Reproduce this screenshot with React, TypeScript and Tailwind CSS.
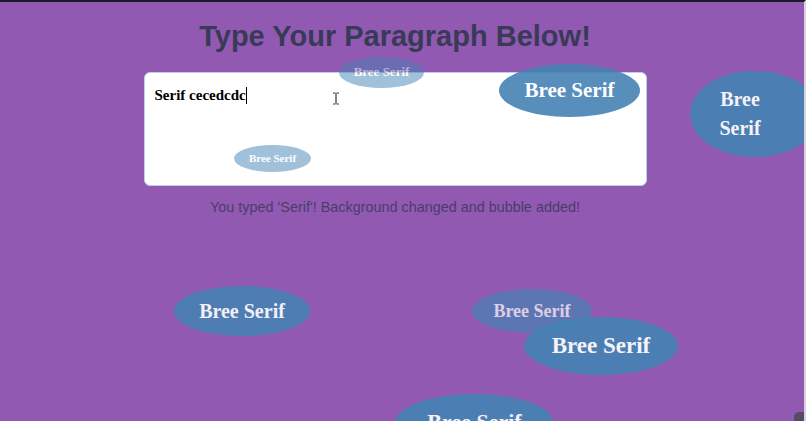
import React from "react";

type Bubble = {
  left: number;
  top: number;
  w: number;
  h: number;
  size: number;
  opacity: number;
  lines?: string[];
};

const bubbles: Bubble[] = [
  { left: 174, top: 286, w: 136, h: 50, size: 20, opacity: 0.9 },
  { left: 472, top: 289, w: 120, h: 44, size: 18, opacity: 0.7 },
  { left: 524, top: 317, w: 154, h: 58, size: 23, opacity: 0.92 },
  { left: 396, top: 394, w: 157, h: 56, size: 22, opacity: 0.92 },
  { left: 690, top: 71, w: 130, h: 86, size: 20, opacity: 0.92, lines: ["Bree", "Serif"] },
  { left: 499, top: 64, w: 141, h: 53, size: 21, opacity: 0.9 },
  { left: 234, top: 145, w: 77, h: 27, size: 11, opacity: 0.5 },
  { left: 339, top: 57, w: 85, h: 31, size: 13, opacity: 0.5 },
];

const serif = "font-['Liberation_Serif',serif]";

const App = () => {
  return (
    <div className="relative w-[806px] h-[421px] overflow-hidden bg-[#9159b1] border-t-2 border-[#1c1a22] border-r-2 border-r-[#d9d2e2] font-['Liberation_Sans',Arial,sans-serif]">
      <div className="w-[790px] flex flex-col items-center">
        <h1 className="mt-[18px] text-[29px] leading-[32px] font-bold text-[#383b57]">
          Type Your Paragraph Below!
        </h1>
        <div className="relative mt-[20px] w-[503px] h-[114px] bg-white rounded-[6px] border border-[#bcd0ea] px-[10px] py-[12px]">
          <div className={`${serif} text-[15px] font-bold text-black leading-[20px] flex items-center`}>
            Serif cecedcdc
            <span className="inline-block w-px h-[17px] bg-black" />
          </div>
          <svg
            className="absolute left-[187px] top-[19px]"
            width="8"
            height="13"
            viewBox="0 0 8 13"
          >
            <path
              d="M1 1h2.5M4.5 1H7M4 1.5v10M1 12h2.5M4.5 12H7"
              stroke="#333"
              strokeWidth="1.2"
              fill="none"
            />
          </svg>
        </div>
        <p className="mt-[9px] text-[14.4px] leading-[24px] text-[#4a3d6a]">
          You typed 'Serif'! Background changed and bubble added!
        </p>
      </div>

      {bubbles.map((b, i) => (
        <div
          key={i}
          className="absolute rounded-[50%] bg-[#4682b4] flex items-center"
          style={{
            left: b.left,
            top: b.top - 2,
            width: b.w,
            height: b.h,
            opacity: b.opacity,
          }}
        >
          <div
            className={`${serif} font-bold text-white text-center leading-[1.45]`}
            style={{ fontSize: b.size, width: b.lines ? 100 : b.w }}
          >
            {b.lines
              ? b.lines.map((l) => <div key={l}>{l}</div>)
              : "Bree Serif"}
          </div>
        </div>
      ))}

      <div className="absolute right-0 bottom-0 w-[10px] h-[9px] rounded-tl-[5px] bg-[#5a4a66]" />
    </div>
  );
};

export default App;
